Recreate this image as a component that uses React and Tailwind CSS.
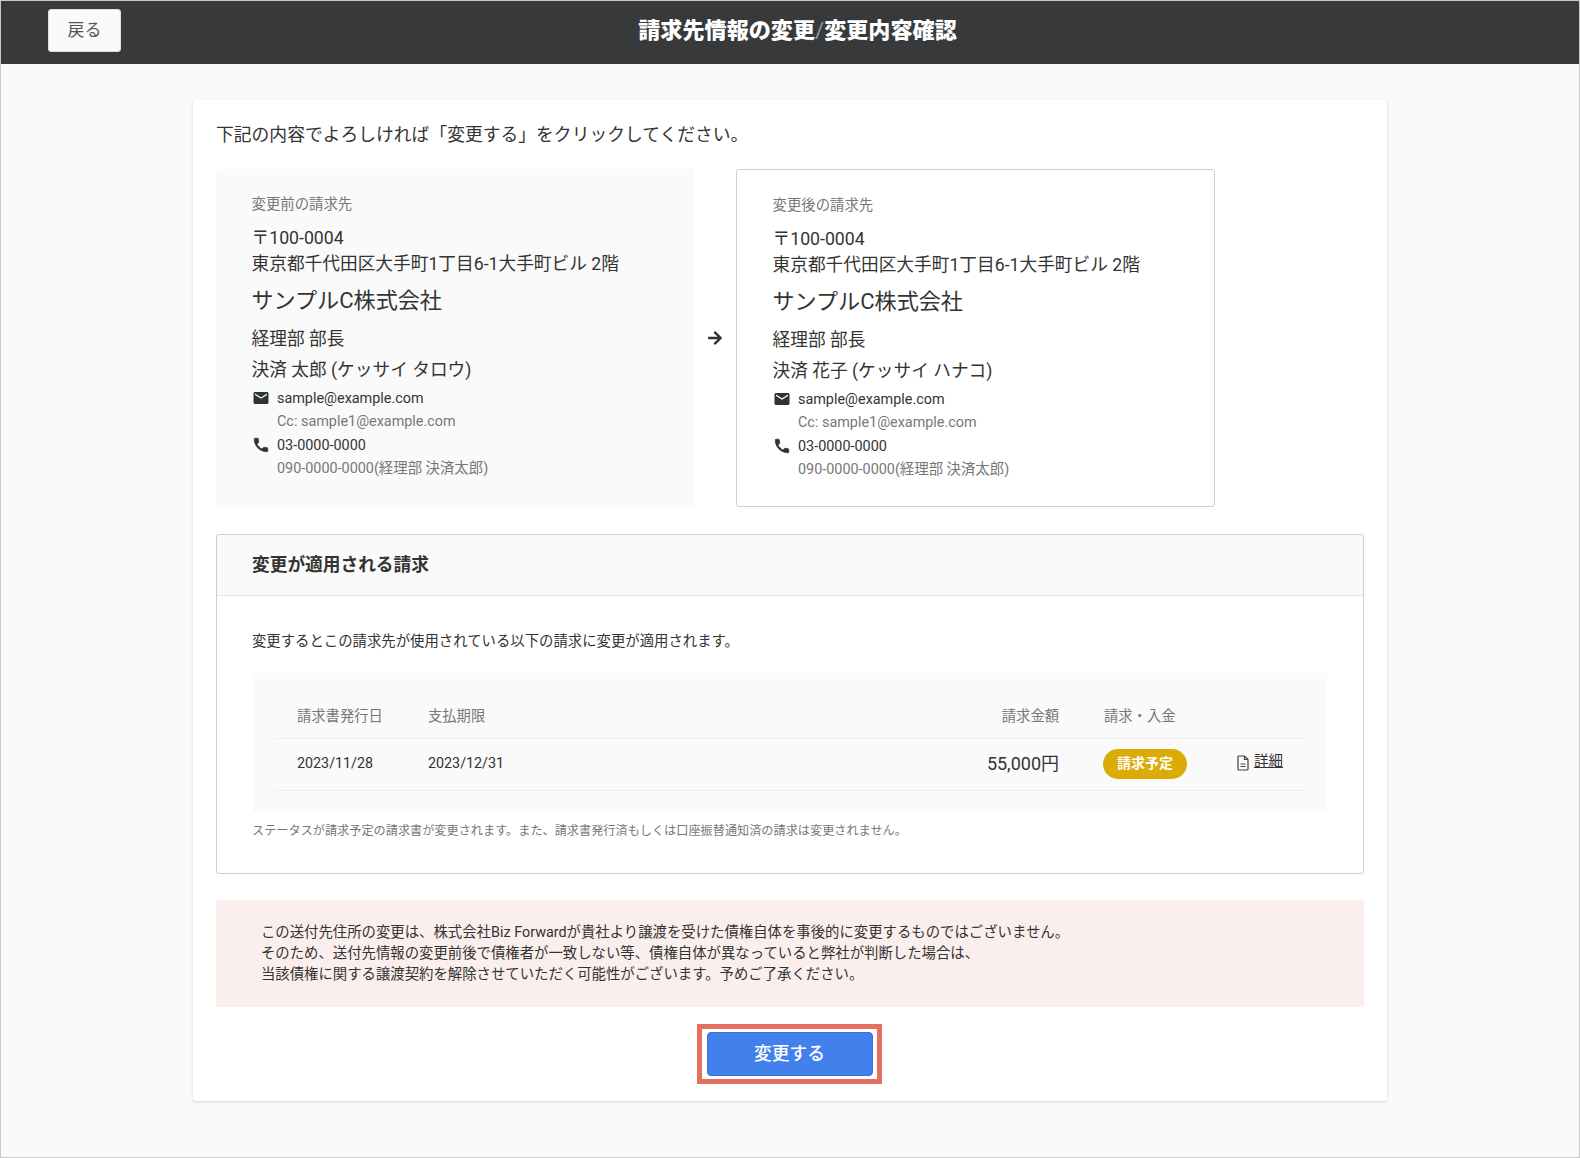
import React from 'react';
import { FaArrowRight } from 'react-icons/fa';
import { MdEmail } from 'react-icons/md';

const fontStack = "font-['Roboto','Noto_Sans_CJK_JP',sans-serif]";

const PhoneIcon = () => (
  <svg className="mt-[2px] shrink-0 w-[18px] h-[18px] text-[#2d3438]" viewBox="0 0 24 24" fill="currentColor" stroke="currentColor" strokeWidth="1">
    <path d="M6.62 10.79c1.44 2.83 3.76 5.14 6.59 6.59l2.2-2.2c.27-.27.67-.36 1.02-.24 1.12.37 2.33.57 3.57.57.55 0 1 .45 1 1V20c0 .55-.45 1-1 1-9.39 0-17-7.61-17-17 0-.55.45-1 1-1h3.5c.55 0 1 .45 1 1 0 1.25.2 2.45.57 3.57.11.35.03.74-.25 1.02l-2.2 2.2z" />
  </svg>
);

const BillingCard = ({ label, name, outlined }) => (
  <div
    className={`h-[338px] rounded-[3px] pl-[35.5px] pt-[26px] ${
      outlined ? 'w-[479px] bg-white border border-[#cfcfcf]' : 'w-[478px] bg-[#fafafa]'
    }`}
  >
    <p className="text-[14.4px] leading-[20px] text-[#777]">{label}</p>
    <p className="mt-[10px] text-[17.7px] leading-[27px] text-[#333]">〒100-0004</p>
    <p className="text-[17.7px] leading-[25px] text-[#333]">東京都千代田区大手町1丁目6-1大手町ビル 2階</p>
    <p className="mt-[7px] text-[22.1px] leading-[32px] text-[#333]">サンプルC株式会社</p>
    <p className="mt-[8px] text-[17.7px] leading-[30.6px] text-[#333]">経理部 部長</p>
    <p className="text-[17.7px] leading-[30.6px] text-[#333]">{name}</p>
    <div className="mt-[2px] flex text-[14.4px] leading-[23.2px]">
      <MdEmail className="mt-[2px] shrink-0 w-[18px] h-[18px] text-[#2d3438]" />
      <div className="ml-[7.5px]">
        <p className="text-[#333]">sample@example.com</p>
        <p className="text-[#777]">Cc: sample1@example.com</p>
      </div>
    </div>
    <div className="flex text-[14.4px] leading-[23.2px]">
      <PhoneIcon />
      <div className="ml-[7.5px]">
        <p className="text-[#333]">03-0000-0000</p>
        <p className="text-[#777]">090-0000-0000(経理部 決済太郎)</p>
      </div>
    </div>
  </div>
);

const App = () => {
  return (
    <div className={`${fontStack} w-[1580px] h-[1158px] bg-[#fafafa] border border-[#c8c8c8]`}>
      {/* ヘッダー */}
      <header className="h-[63px] bg-[#38393b] flex items-center pl-[47px] pb-[4px]">
        <button className="w-[73px] h-[43px] rounded-[3px] bg-[#fafafa] border border-[#dddddd] text-[17px] text-[#555]">戻る</button>
        <h1 className="flex-1 pr-[105px] text-center text-[22.1px] font-black text-white">
          請求先情報の変更<span className="font-normal text-[#999]">/</span>変更内容確認
        </h1>
      </header>

      <main className="ml-[192px] mt-[36px] w-[1194px] h-[1001px] bg-white rounded-[3px] shadow-[0_1px_3px_rgba(0,0,0,0.15)] pl-[23px] pr-[23px] pt-[22px]">
        <p className="text-[17.8px] leading-[25px] text-[#333]">
          下記の内容でよろしければ「変更する」をクリックしてください。
        </p>

        <div className="mt-[22px] flex items-center">
          <BillingCard label="変更前の請求先" name="決済 太郎 (ケッサイ タロウ)" />
          <div className="w-[42px] flex justify-center">
            <FaArrowRight className="w-[16px] h-[16px] text-[#2d3438]" />
          </div>
          <BillingCard outlined label="変更後の請求先" name="決済 花子 (ケッサイ ハナコ)" />
        </div>

        {/* 適用される請求 */}
        <section className="mt-[27px] h-[340px] rounded-[3px] border border-[#cfcfcf]">
          <div className="h-[61px] bg-[#fafafa] border-b border-[#e4e4e4] pl-[35px] flex items-center rounded-t-[3px]">
            <h2 className="text-[17.7px] font-bold text-[#333]">変更が適用される請求</h2>
          </div>
          <div className="px-[36px]">
            <p className="-ml-[1px] mt-[35px] text-[14.38px] leading-[22px] text-[#333]">
              変更するとこの請求先が使用されている以下の請求に変更が適用されます。
            </p>
            <div className="mt-[20px] h-[139px] bg-[#fafafa] px-[22px] pt-[21px]">
              <div className="h-[45px] pt-[1px] border-b border-[#eeeeee] flex items-center text-[14.3px] text-[#777]">
                <span className="ml-[22px] w-[131px]">請求書発行日</span>
                <span className="w-[299px]">支払期限</span>
                <span className="w-[332px] text-right">請求金額</span>
                <span className="ml-[45px]">請求・入金</span>
              </div>
              <div className="h-[52px] pb-[2px] border-b border-[#eeeeee] flex items-center text-[#333]">
                <span className="ml-[22px] w-[131px] text-[14.3px]">2023/11/28</span>
                <span className="w-[299px] text-[14.3px]">2023/12/31</span>
                <span className="w-[332px] text-right text-[18px]">55,000円</span>
                <span className="ml-[44px] w-[84px] h-[30px] rounded-full bg-[#dbab07] text-white text-[14px] font-bold flex items-center justify-center">
                  請求予定
                </span>
                <svg className="ml-[50px] mb-[2px] w-[12px] h-[16px] text-[#444]" viewBox="0 0 12 16" fill="none" stroke="currentColor" strokeWidth="1.2">
                  <path d="M2 1h5.5L11 4.5V14a1 1 0 0 1-1 1H2a1 1 0 0 1-1-1V2a1 1 0 0 1 1-1z" />
                  <path d="M7.5 1v3.5H11" />
                  <path d="M3.5 9h5M3.5 11.5h5" />
                </svg>
                <span className="ml-[5px] mb-[4px] text-[14.5px] underline">詳細</span>
              </div>
            </div>
            <p className="-ml-[1px] mt-[10px] text-[12.17px] leading-[18px] text-[#777]">
              ステータスが請求予定の請求書が変更されます。また、請求書発行済もしくは口座振替通知済の請求は変更されません。
            </p>
          </div>
        </section>

        {/* 注意書き */}
        <div className="mt-[26px] h-[107px] bg-[#fbefed] pl-[45px] pt-[22px] text-[14.38px] leading-[21px] text-[#333]">
          <p>この送付先住所の変更は、株式会社Biz Forwardが貴社より譲渡を受けた債権自体を事後的に変更するものではございません。</p>
          <p>そのため、送付先情報の変更前後で債権者が一致しない等、債権自体が異なっていると弊社が判断した場合は、</p>
          <p>当該債権に関する譲渡契約を解除させていただく可能性がございます。予めご了承ください。</p>
        </div>

        <div className="mt-[17px] pr-[1px] flex justify-center">
          <div className="w-[185px] h-[60px] border-[5px] border-[#e57060] flex items-center justify-center">
            <button className="w-[166px] h-[44px] pt-[1px] rounded-[4px] bg-[#4280ec] border border-[#3a70d0] text-white text-[17.7px] font-medium">
              変更する
            </button>
          </div>
        </div>
      </main>
    </div>
  );
};

export default App;
